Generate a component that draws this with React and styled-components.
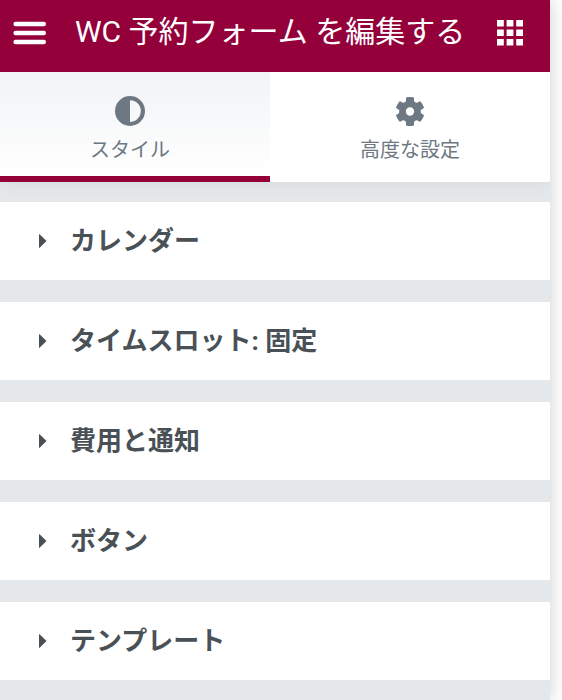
import React, { useState } from "react";
import styled, { createGlobalStyle } from "styled-components";

const GlobalStyle = createGlobalStyle`
  * { box-sizing: border-box; }
  body { margin: 0; background: #fff; }
  body, button { font-family: Roboto, "Noto Sans CJK JP", sans-serif; }
  button { border: 0; padding: 0; margin: 0; background: none; color: inherit; cursor: pointer; }
  svg { display: block; }
`;

const Panel = styled.aside`
  min-height: 100vh;
  margin-right: 12px;
  background: #e4e8eb;
  box-shadow: 0 0 16px rgba(0, 0, 0, 0.2);
`;

const Header = styled.header`
  display: flex;
  align-items: center;
  gap: 27px;
  height: 72px;
  padding: 0 26px 8px 12px;
  background: #93003a;
  color: #fff;
`;

const Title = styled.h1`
  flex: 1;
  margin: 0;
  font-size: 30px;
  line-height: 40px;
  font-weight: 400;
  white-space: nowrap;
`;

const IconButton = styled.button`
  padding-top: 2px;
`;

const Tabs = styled.div`
  position: relative;
  display: grid;
  grid-template-columns: 27fr 28fr;
  height: 110px;
  background: #fff;
  box-shadow: 0 2px 16px rgba(0, 0, 0, 0.06);
  clip-path: inset(0 0 -20px 0);
`;

const Tab = styled.button`
  display: flex;
  flex-direction: column;
  align-items: center;
  gap: 10px;
  padding: 24px ${(p) => (p.$first ? "10px" : "0")} 0 0;
  color: #6d7882;
  font-size: 20px;
  line-height: 28px;
  border-bottom: 6px solid ${(p) => (p.$active ? "#93003a" : "transparent")};
  background: ${(p) => (p.$active ? "linear-gradient(#f1f3f5, #fff)" : "#fff")};
`;

const Sections = styled.div`
  display: flex;
  flex-direction: column;
  gap: 22px;
  padding: 20px 0;
`;

const Section = styled.button`
  display: flex;
  align-items: center;
  gap: 23px;
  height: 78px;
  padding: 0 38px;
  background: #fff;
  color: #495157;
  font-size: 26px;
  line-height: 38px;
  font-weight: 700;
  text-align: left;
`;

const Arrow = styled.svg`
  flex: none;
  fill: currentColor;
`;

const MenuIcon = () => (
  <svg width="36" height="26" viewBox="0 0 36 26" stroke="currentColor" strokeWidth="4.4" strokeLinecap="round" aria-hidden="true">
    <path d="M3.6 4H31.8M3.6 13H31.8M3.6 22H31.8" />
  </svg>
);

const GridIcon = () => (
  <svg width="27" height="26" viewBox="0 0 27 26" fill="currentColor" aria-hidden="true">
    {[0, 9.5, 19].map((y) =>
      [0, 9.6, 19.2].map((x) => <rect key={`${x}-${y}`} x={x} y={y} width="6.8" height="6.5" />)
    )}
  </svg>
);

const ContrastIcon = () => (
  <svg width="30" height="30" viewBox="0 0 30 30" aria-hidden="true">
    <path fill="currentColor" fillRule="evenodd" d="M15 0a15 15 0 1 1 0 30a15 15 0 0 1 0-30zM15 4.2v21.6a10.8 10.8 0 0 0 0-21.6z" />
  </svg>
);

const GearIcon = () => (
  <svg width="30" height="30" viewBox="-15 -15.5 30 30" aria-hidden="true">
    <g fill="none" stroke="currentColor">
      <circle r="7.4" strokeWidth="6.4" />
      {[0, 60, 120, 180, 240, 300].map((a) => (
        <path
          key={a}
          transform={`rotate(${a})`}
          fill="currentColor"
          stroke="none"
          d="M-5.8-8.2Q-4-9.6-4-11V-13.2Q-4-14.1-3.1-14.2Q0-14.6 3.1-14.2Q4-14.1 4-13.2V-11Q4-9.6 5.8-8.2z"
        />
      ))}
    </g>
  </svg>
);

const tabs = [
  { id: "style", label: "スタイル", Icon: ContrastIcon },
  { id: "advanced", label: "高度な設定", Icon: GearIcon },
];

const sections = ["カレンダー", "タイムスロット: 固定", "費用と通知", "ボタン", "テンプレート"];

export default function App() {
  const [active, setActive] = useState("style");
  return (
    <>
      <GlobalStyle />
      <Panel>
        <Header>
          <IconButton type="button" aria-label="メニュー"><MenuIcon /></IconButton>
          <Title>WC 予約フォーム を編集する</Title>
          <IconButton type="button" aria-label="ウィジェット一覧"><GridIcon /></IconButton>
        </Header>
        <Tabs role="tablist">
          {tabs.map(({ id, label, Icon }, i) => (
            <Tab
              key={id}
              type="button"
              role="tab"
              aria-selected={active === id}
              $active={active === id}
              $first={i === 0}
              onClick={() => setActive(id)}
            >
              <Icon />
              {label}
            </Tab>
          ))}
        </Tabs>
        <Sections>
          {sections.map((name) => (
            <Section key={name} type="button" aria-expanded="false">
              <Arrow width="9" height="14" viewBox="0 0 9 14" aria-hidden="true">
                <path d="M1 .6Q1-.4 1.8.4L8 6.4Q8.6 7 8 7.6L1.8 13.6Q1 14.4 1 13.4z" />
              </Arrow>
              {name}
            </Section>
          ))}
        </Sections>
      </Panel>
    </>
  );
}
